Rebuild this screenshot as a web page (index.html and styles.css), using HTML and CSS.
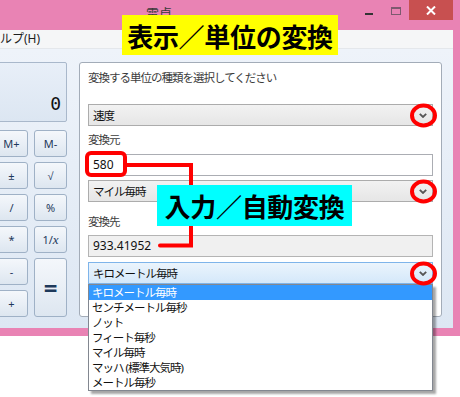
FILE: index.html
```html
<!DOCTYPE html>
<html lang="ja">
<head>
    <meta charset="UTF-8">
    <meta name="viewport" content="width=device-width, initial-scale=1.0">
    <title>電卓 - 単位の変換</title>
    <link rel="stylesheet" href="styles.css">
</head>
<body>
    <div class="window">
        <div class="titlebar">
            <span class="title">電卓</span>
            <div class="controls">
                <span class="ctrl ctrl-min"><i></i></span>
                <span class="ctrl ctrl-max"><i></i></span>
                <span class="ctrl ctrl-close">
                    <svg width="10" height="9" viewBox="0 0 10 9"><path d="M1 0.5 L9 8.5 M9 0.5 L1 8.5" stroke="#fff" stroke-width="2"/></svg>
                </span>
            </div>
        </div>

        <div class="menubar">
            <span class="menu-item">ヘルプ(H)</span>
        </div>

        <div class="client">
            <!-- calculator column (mostly cut off on the left) -->
            <div class="calc">
                <div class="display">0</div>
                <div class="keypad">
                    <button class="key">M+</button>
                    <button class="key">M-</button>
                    <button class="key">±</button>
                    <button class="key">√</button>
                    <button class="key">/</button>
                    <button class="key">%</button>
                    <button class="key">*</button>
                    <button class="key">1/<span class="key-x">x</span></button>
                    <button class="key">-</button>
                    <button class="key key-equals">=</button>
                    <button class="key">+</button>
                </div>
            </div>

            <!-- unit conversion panel -->
            <div class="converter">
                <p class="label">変換する単位の種類を選択してください</p>
                <div class="select select-type">
                    <span>速度</span>
                    <svg class="chevron" width="8" height="5" viewBox="0 0 8 5"><polyline points="0.8,0.8 4,4 7.2,0.8" fill="none" stroke="#555" stroke-width="1.8"/></svg>
                </div>

                <p class="label label-from">変換元</p>
                <div class="field field-from">580</div>
                <div class="select select-from">
                    <span>マイル毎時</span>
                    <svg class="chevron" width="8" height="5" viewBox="0 0 8 5"><polyline points="0.8,0.8 4,4 7.2,0.8" fill="none" stroke="#555" stroke-width="1.8"/></svg>
                </div>

                <p class="label label-to">変換先</p>
                <div class="field field-to">933.41952</div>
                <div class="select-wrap">
                    <div class="select select-open">
                        <span>キロメートル毎時</span>
                        <svg class="chevron" width="8" height="5" viewBox="0 0 8 5"><polyline points="0.8,0.8 4,4 7.2,0.8" fill="none" stroke="#555" stroke-width="1.8"/></svg>
                    </div>
                    <ul class="options">
                        <li class="option selected">キロメートル毎時</li>
                        <li class="option">センチメートル毎秒</li>
                        <li class="option">ノット</li>
                        <li class="option">フィート毎秒</li>
                        <li class="option">マイル毎時</li>
                        <li class="option">マッハ (標準大気時)</li>
                        <li class="option">メートル毎秒</li>
                    </ul>
                </div>
            </div>
        </div>
    </div>

    <!-- annotations -->
    <svg class="marks" width="460" height="397" viewBox="0 0 460 397">
        <rect x="87" y="153" width="38" height="22" rx="4" fill="none" stroke="#ff0000" stroke-width="4"/>
        <polyline points="127,165 191,165 191,245.5 160,245.5" fill="none" stroke="#ff0000" stroke-width="4" stroke-linecap="round"/>
        <ellipse cx="423.5" cy="115.5" rx="11.5" ry="10" fill="none" stroke="#ff0000" stroke-width="4"/>
        <ellipse cx="423.5" cy="191.5" rx="11.5" ry="10" fill="none" stroke="#ff0000" stroke-width="4"/>
        <ellipse cx="423.5" cy="273.5" rx="11.5" ry="10" fill="none" stroke="#ff0000" stroke-width="4"/>
    </svg>
    <div class="note note-yellow">表示／単位の変換</div>
    <div class="note note-cyan">入力／自動変換</div>
</body>
</html>
```

FILE: styles.css
```css
* {
    margin: 0;
    padding: 0;
    box-sizing: border-box;
}

body {
    font-family: "Noto Sans", "Noto Sans CJK JP", sans-serif;
    background: #fff;
    width: 460px;
    height: 397px;
    overflow: hidden;
    position: relative;
}

/* window frame */
.window {
    width: 460px;
    background: #e983b4;
    padding-right: 7px;
    padding-bottom: 8px;
}

.titlebar {
    height: 30px;
    display: flex;
    align-items: flex-start;
}

.title {
    margin-left: 146px;
    line-height: 27px;
    font-size: 13px;
    color: #3a3a3a;
}

.controls {
    margin-left: auto;
    display: flex;
}

.ctrl {
    height: 20px;
    display: flex;
    align-items: center;
    justify-content: center;
}

.ctrl-min {
    width: 27px;
}

.ctrl-min i {
    display: block;
    width: 8px;
    height: 2px;
    margin-top: 8px;
    background: #333;
}

.ctrl-max {
    width: 27px;
}

.ctrl-max i {
    display: block;
    width: 10px;
    height: 8px;
    margin-top: 1px;
    border: 1px solid #7d5a6f;
    border-top-width: 2px;
}

.ctrl-close {
    width: 44px;
    background: #c85050;
}

.menubar {
    height: 19px;
    background: #f5f6f7;
    border-bottom: 1px solid #e4e7eb;
    font-size: 12px;
    line-height: 18px;
    color: #1e1e1e;
}

.menu-item {
    display: inline-block;
    margin-left: -12px;
}

.client {
    height: 279px;
    display: flex;
    gap: 12px;
    padding: 13px 11px 0 0;
    background: linear-gradient(180deg, #eef3fa 0%, #dde7f3 100%);
}

/* calculator */
.calc {
    width: 69px;
    margin-left: -2px;
    flex-shrink: 0;
}

.display {
    height: 60px;
    border: 1px solid #a9b8cb;
    border-radius: 2px;
    background: linear-gradient(180deg, #e8eff8 0%, #dce6f2 100%);
    margin-bottom: 8px;
    padding: 31px 5px 0 0;
    text-align: right;
    font-family: "DejaVu Sans Mono", monospace;
    font-size: 18px;
    line-height: 20px;
    color: #111;
}

.keypad {
    margin-left: -3px;
    display: grid;
    grid-template-columns: 33px 33px;
    grid-auto-rows: 27px;
    gap: 5px 6px;
}

.key {
    font-family: "Noto Sans", sans-serif;
    font-size: 11px;
    color: #1e395b;
    border: 1px solid #9fb1c6;
    border-radius: 3px;
    background: linear-gradient(180deg, #f4f7fb 0%, #e9eff6 50%, #dde6f0 100%);
}

.key-x {
    font-family: "Liberation Serif", serif;
    font-style: italic;
    font-size: 13px;
}

.key-equals {
    grid-row: span 2;
    font-size: 24px;
    font-weight: bold;
}

/* converter panel */
.converter {
    flex: 1;
    height: 255px;
    background: #fff;
    border: 1px solid #a3acb8;
    border-radius: 3px;
    padding: 7px 8px 0 8px;
    font-size: 11.5px;
    letter-spacing: -1px;
}

.label {
    line-height: 16px;
    color: #3c3c3c;
}

.select {
    height: 22px;
    display: flex;
    align-items: center;
    justify-content: space-between;
    padding: 0 5px 0 4px;
    border: 1px solid #acacac;
    background: linear-gradient(180deg, #f2f2f2 0%, #e6e6e6 100%);
    color: #111;
}

.select-type {
    margin-top: 18px;
}

.label-from {
    margin-top: 6px;
}

.field {
    height: 22px;
    margin-top: 6px;
    padding-left: 4px;
    border: 1px solid #abadb3;
    background: #fff;
    font-size: 12px;
    letter-spacing: 0;
    line-height: 20px;
    color: #111;
}

.select-from {
    margin-top: 4px;
}

.label-to {
    margin-top: 12px;
}

.field-to {
    margin-top: 5px;
    background: #f0f0f0;
    border-color: #b4b4b4;
}

.select-wrap {
    position: relative;
    margin-top: 5px;
}

.select-open {
    border-color: #7eb4ea;
    background: linear-gradient(180deg, #ebf4fc 0%, #d4e8fa 100%);
}

/* open dropdown list */
.options {
    list-style: none;
    position: absolute;
    top: 100%;
    left: 0;
    right: 0;
    z-index: 2;
    background: #fff;
    border: 1px solid #828790;
    box-shadow: 3px 3px 2px rgba(0, 0, 0, 0.35);
}

.option {
    height: 15px;
    line-height: 15px;
    padding-left: 3px;
    color: #111;
}

.option.selected {
    background: #3399ff;
    color: #fff;
}

/* annotations */
.marks {
    position: absolute;
    top: 0;
    left: 0;
    z-index: 5;
}

.note {
    position: absolute;
    z-index: 6;
    display: flex;
    align-items: center;
    justify-content: center;
    font-family: "Noto Sans CJK JP", sans-serif;
    font-weight: bold;
    font-size: 26px;
    letter-spacing: -0.3px;
    color: #000;
}

.note-yellow {
    left: 122px;
    top: 15px;
    width: 216px;
    height: 40px;
    background: #ffff00;
}

.note-cyan {
    left: 157px;
    top: 185px;
    width: 195px;
    height: 41px;
    background: #00ffff;
}
```
